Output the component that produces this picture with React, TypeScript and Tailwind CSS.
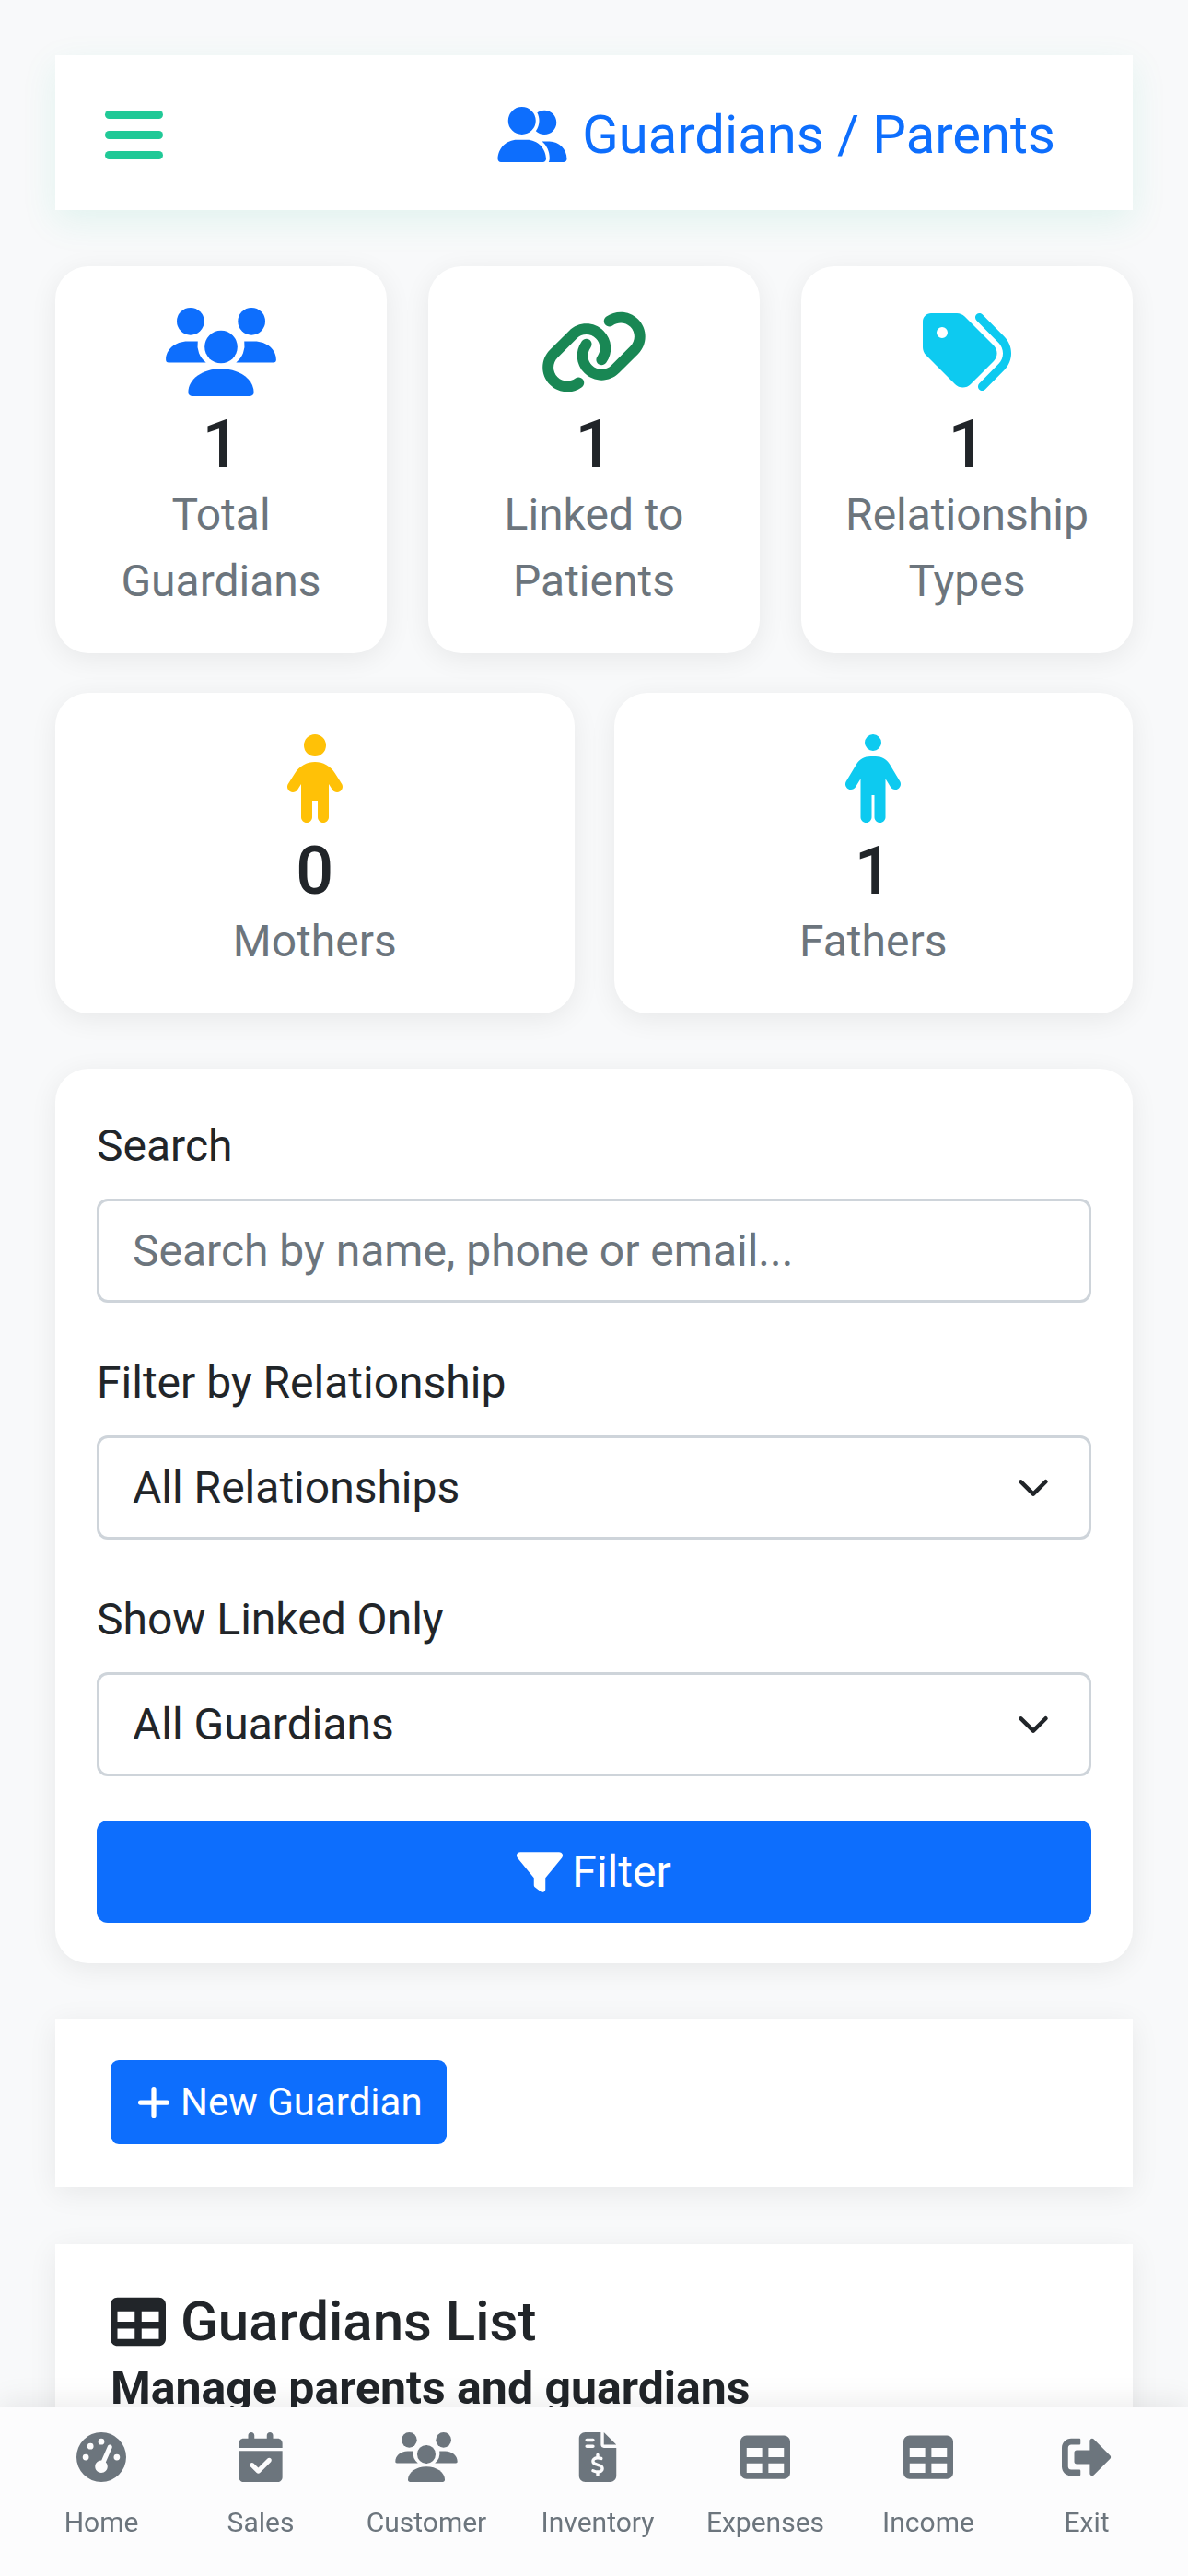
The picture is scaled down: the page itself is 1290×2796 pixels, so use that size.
import type { ReactNode } from "react";
import { BsPlusLg, BsChevronDown } from "react-icons/bs";
import { FaSignOutAlt } from "react-icons/fa";
import {
  FaCalendarCheck,
  FaChild,
  FaFileInvoiceDollar,
  FaFilter,
  FaGaugeHigh,
  FaLink,
  FaPerson,
  FaTable,
  FaTags,
  FaUserGroup,
} from "react-icons/fa6";

const Group = ({ className }: { className?: string }) => (
  <svg viewBox="0 0 121 97" className={className} fill="currentColor">
    <circle cx="27" cy="15" r="15" />
    <circle cx="94" cy="15" r="15" />
    <circle cx="60.5" cy="43" r="18" />
    <path d="M0 57C0 46 10 37 24 37h11A24 24 0 0 0 44 60H3C1 60 0 59 0 57z" />
    <path d="M121 57c0-11-10-20-24-20H86A24 24 0 0 1 77 60h41c2 0 3-1 3-3z" />
    <path d="M24.500 93c0-15 16-26 36-26s36 11 36 26c0 2-2 4-4 4h-64c-2 0-4-2-4-4z" />
  </svg>
);

const StatCard = ({ icon, value, label }: { icon: ReactNode; value: string; label: string }) => (
  <div className="flex-1 rounded-[36px] bg-white px-[30px] pt-[45px] pb-[42px] text-center shadow-[0_6px_30px_rgba(0,0,0,0.07)]">
    <div className="flex h-[96px] items-center justify-center">{icon}</div>
    <div className="mt-[13px] text-[72px] leading-[80px] font-medium text-[#212529]">{value}</div>
    <div className="text-[48px] leading-[72px] text-[#6c757d]">{label}</div>
  </div>
);

const Field = ({ label, children }: { label: string; children: ReactNode }) => (
  <div className="mb-[48px]">
    <label className="mb-[21px] block pt-[3px] text-[48px] leading-[72px] text-[#212529]">{label}</label>
    {children}
  </div>
);

const SelectBox = ({ value }: { value: string }) => (
  <div className="flex h-[113px] items-center justify-between rounded-[12px] border-[3px] border-[#ced4da] bg-white pr-[42px] pl-[36px] text-[48px] text-[#212529]">
    {value}
    <BsChevronDown className="h-[36px] w-[36px] stroke-[1]" />
  </div>
);

const navItems = [
  { label: "Home", width: "w-[176px]", icon: <FaGaugeHigh /> },
  { label: "Sales", width: "w-[170px]", icon: <FaCalendarCheck /> },
  { label: "Customer", width: "w-[190px]", icon: <Group className="h-[54px] w-[68px]" /> },
  { label: "Inventory", width: "w-[182px]", icon: <FaFileInvoiceDollar /> },
  { label: "Expenses", width: "w-[182px]", icon: <FaTable /> },
  { label: "Income", width: "w-[172px]", icon: <FaTable /> },
  { label: "Exit", width: "w-[172px]", icon: <FaSignOutAlt /> },
];

export default function App() {
  return (
    <div className="relative h-[2796px] overflow-hidden bg-[#f8f9fa] font-['Roboto','Noto_Sans',sans-serif]">
      <div className="flex flex-col px-[60px] pt-[60px]">
        <header className="flex h-[168px] items-center justify-between bg-white pt-[4px] pr-[84px] pl-[54px] shadow-[0_12px_36px_rgba(32,201,151,0.1)]">
          <div className="flex w-[63px] flex-col gap-[13px]">
            <span className="h-[9px] rounded-full bg-[#20c997]" />
            <span className="h-[9px] rounded-full bg-[#20c997]" />
            <span className="h-[9px] rounded-full bg-[#20c997]" />
          </div>
          <h1 className="flex items-center gap-[16px] text-[58px] leading-[72px] text-[#0d6efd]">
            <FaUserGroup className="h-[60px] w-[76px]" />
            Guardians / Parents
          </h1>
        </header>

        <div className="mt-[61px] flex gap-[45px]">
          <StatCard icon={<Group className="h-[96px] w-[120px] text-[#0d6efd]" />} value="1" label="Total Guardians" />
          <StatCard icon={<FaLink className="h-[96px] w-[118px] text-[#198754]" />} value="1" label="Linked to Patients" />
          <StatCard icon={<FaTags className="h-[96px] w-[108px] text-[#0dcaf0]" />} value="1" label="Relationship Types" />
        </div>

        <div className="mt-[43px] flex gap-[43px]">
          <StatCard icon={<FaChild className="h-[96px] w-[70px] text-[#ffc107]" />} value="0" label="Mothers" />
          <StatCard icon={<FaPerson className="h-[96px] w-[70px] text-[#0dcaf0]" />} value="1" label="Fathers" />
        </div>

        <section className="mt-[60px] rounded-[36px] bg-white px-[45px] pt-[45px] pb-[44px] shadow-[0_6px_30px_rgba(0,0,0,0.07)]">
          <Field label="Search">
            <div className="flex h-[113px] items-center rounded-[12px] border-[3px] border-[#ced4da] pl-[36px] text-[48px] text-[#6c757d]">
              Search by name, phone or email...
            </div>
          </Field>
          <Field label="Filter by Relationship">
            <SelectBox value="All Relationships" />
          </Field>
          <Field label="Show Linked Only">
            <SelectBox value="All Guardians" />
          </Field>
          <button className="flex h-[111px] w-full items-center justify-center gap-[10px] rounded-[12px] bg-[#0d6efd] text-[48px] text-white">
            <FaFilter className="h-[50px] w-[50px]" />
            Filter
          </button>
        </section>

        <section className="mt-[60px] h-[183px] bg-white px-[60px] pt-[45px] shadow-[0_6px_30px_rgba(0,0,0,0.07)]">
          <button className="flex h-[91px] items-center gap-[8px] rounded-[9px] bg-[#0d6efd] px-[26px] text-[42px] text-white">
            <BsPlusLg className="h-[42px] w-[42px] stroke-[1]" />
            New Guardian
          </button>
        </section>

        <section className="mt-[62px] h-[400px] bg-white px-[60px] pt-[48px] shadow-[0_6px_30px_rgba(0,0,0,0.07)]">
          <h2 className="flex items-center gap-[16px] text-[60px] leading-[72px] font-medium text-[#212529]">
            <FaTable className="h-[60px] w-[60px]" />
            Guardians List
          </h2>
          <p className="text-[50px] leading-[72px] font-bold text-[#212529]">Manage parents and guardians</p>
        </section>
      </div>

      <nav className="fixed right-0 bottom-0 left-0 flex h-[183px] items-start bg-[#fcfcfd] px-[22px] pt-[27px] shadow-[0_-6px_30px_rgba(0,0,0,0.08)]">
        {navItems.map((item) => (
          <div key={item.label} className={`${item.width} flex flex-col items-center text-[#6c757d]`}>
            <div className="flex h-[54px] items-center justify-center text-[54px]">{item.icon}</div>
            <span className="mt-[21px] text-[30px] leading-[45px]">{item.label}</span>
          </div>
        ))}
      </nav>
    </div>
  );
}
